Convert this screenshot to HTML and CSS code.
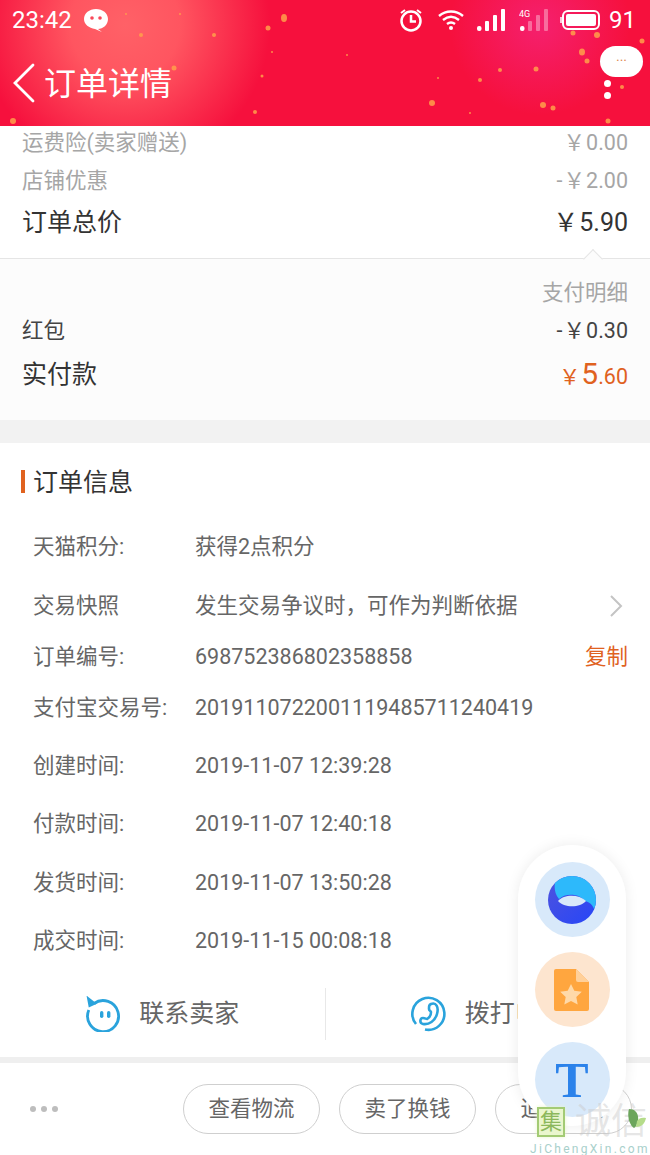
FILE: index.html
```html
<!DOCTYPE html>
<html>
<head>
  <meta charset="utf-8">
  <link rel="stylesheet" href="styles.css">
</head>
<body>
  <div class="screen">
    <div class="header">
      <svg class="sparkles" width="650" height="126" viewBox="0 0 650 126">
        <g fill="#ffa04a" fill-opacity=".85">
          <ellipse cx="284" cy="18" rx="3" ry="4"/><circle cx="268" cy="28" r="2.5"/><circle cx="214" cy="35" r="2"/>
          <circle cx="141" cy="35" r="2"/><ellipse cx="582" cy="52" rx="3" ry="3.5"/><circle cx="587" cy="61" r="2.5"/>
          <circle cx="500" cy="70" r="2"/><circle cx="536" cy="69" r="2.5"/><circle cx="480" cy="80" r="2"/>
          <circle cx="432" cy="103" r="3"/><circle cx="543" cy="105" r="3"/><circle cx="553" cy="108" r="2.5"/>
          <circle cx="255" cy="112" r="2"/><circle cx="13" cy="121" r="3"/><circle cx="608" cy="121" r="2.5"/>
          <circle cx="174" cy="68" r="2.5"/><circle cx="642" cy="41" r="2.5"/><circle cx="622" cy="87" r="2"/>
          <circle cx="573" cy="33" r="2.5"/><circle cx="597" cy="35" r="3"/><circle cx="262" cy="76" r="1.5"/>
          <circle cx="347" cy="55" r="1"/><circle cx="272" cy="52" r="1"/><circle cx="180" cy="14" r="1"/>
          <circle cx="126" cy="14" r="1"/><circle cx="438" cy="78" r="1"/><circle cx="470" cy="113" r="1"/>
        </g>
      </svg>
      <div class="status-bar">
        <div class="status-left">
          <span class="clock">23:42</span>
          <svg width="26" height="26" viewBox="0 0 26 26">
            <path d="M13 2c6.600 0 12 4.300 12 10s-5 10-10 10l4 3-7-3C6 21 1 17.500 1 12 1 6.300 6.400 2 13 2z" fill="#fff"/>
            <circle cx="9" cy="11" r="1.800" fill="#f9485a"/><circle cx="17" cy="11" r="1.800" fill="#f9485a"/>
          </svg>
        </div>
        <div class="status-right">
          <svg width="26" height="26" viewBox="0 0 26 26" fill="none" stroke="#fff" stroke-width="2.500">
            <circle cx="13" cy="14" r="9.500"/><path d="M13 8v6.500h5"/><path d="M3 6l4-3M23 6l-4-3" stroke-width="2"/>
          </svg>
          <svg class="wifi" width="28" height="26" viewBox="0 0 28 26" fill="none" stroke="#fff" stroke-width="2.400">
            <path d="M2 9c7-6 17-6 24 0M6 13c5-4 11-4 16 0M10 17c2.500-2 5.500-2 8 0"/><circle cx="14" cy="21" r="2" fill="#fff" stroke="none"/>
          </svg>
          <svg class="signal" width="30" height="24" viewBox="0 0 30 24" fill="#fff">
            <rect x="1" y="18" width="4.500" height="5" rx="2"/><rect x="9" y="13" width="4" height="10" rx="1"/>
            <rect x="17" y="7" width="4" height="16" rx="1"/><rect x="25" y="1" width="4" height="22" rx="1"/>
          </svg>
          <svg class="signal-4g" width="30" height="26" viewBox="0 0 30 26">
            <g fill="#fff" fill-opacity=".35"><rect x="9" y="14" width="4" height="10" rx="1"/><rect x="17" y="8" width="4" height="16" rx="1"/><rect x="25" y="2" width="4" height="22" rx="1"/></g>
            <rect x="1" y="19" width="4.500" height="5" rx="2" fill="#fff"/>
            <text x="0" y="10" class="net-label">4G</text>
          </svg>
          <svg class="battery" width="41" height="24" viewBox="0 0 41 24" fill="none">
            <rect x="3" y="3" width="36" height="18" rx="5" stroke="#fff" stroke-width="2"/>
            <rect x="6" y="6" width="30" height="12" rx="2" fill="#fff"/>
            <path d="M1 9v6" stroke="#fff" stroke-width="1.500"/>
          </svg>
          <span class="battery-level">91</span>
        </div>
      </div>
      <div class="nav-bar">
        <svg class="back" width="24" height="40" viewBox="0 0 24 40" fill="none" stroke="#fff" stroke-width="2.800" stroke-linecap="round">
          <path d="M21 2L3 20l18 18"/>
        </svg>
        <span class="nav-title">订单详情</span>
      </div>
      <div class="menu-bubble">···</div>
      <div class="menu-dot menu-dot-a"></div>
      <div class="menu-dot menu-dot-b"></div>
    </div>

    <div class="summary">
      <div class="row row-muted"><span>运费险(卖家赠送)</span><span class="price"><i>￥</i>0.00</span></div>
      <div class="row row-muted"><span>店铺优惠</span><span class="price">-<i>￥</i>2.00</span></div>
      <div class="row row-total"><span>订单总价</span><span class="price"><i>￥</i>5.90</span></div>
    </div>

    <div class="payment">
      <div class="caret"></div>
      <div class="row row-muted row-end"><span>支付明细</span></div>
      <div class="row row-plain"><span>红包</span><span class="price">-<i>￥</i>0.30</span></div>
      <div class="row row-paid">
        <span>实付款</span>
        <span class="paid"><i>￥</i><b>5</b>.60</span>
      </div>
    </div>

    <div class="gap"></div>

    <div class="info">
      <div class="info-title">订单信息</div>
      <div class="info-row"><span class="info-key">天猫积分:</span><span class="info-val">获得2点积分</span></div>
      <div class="info-row info-row-b">
        <span class="info-key">交易快照</span><span class="info-val">发生交易争议时，可作为判断依据</span>
        <svg class="chevron" width="14" height="24" viewBox="0 0 14 24" fill="none" stroke="#c4c4c4" stroke-width="2"><path d="M2 2l10 10L2 22"/></svg>
      </div>
      <div class="info-row info-row-c">
        <span class="info-key">订单编号:</span><span class="info-val">698752386802358858</span>
        <span class="copy">复制</span>
      </div>
      <div class="info-row"><span class="info-key">支付宝交易号:</span><span class="info-val">2019110722001119485711240419</span></div>
      <div class="info-row"><span class="info-key">创建时间:</span><span class="info-val">2019-11-07 12:39:28</span></div>
      <div class="info-row"><span class="info-key">付款时间:</span><span class="info-val">2019-11-07 12:40:18</span></div>
      <div class="info-row"><span class="info-key">发货时间:</span><span class="info-val">2019-11-07 13:50:28</span></div>
      <div class="info-row"><span class="info-key">成交时间:</span><span class="info-val">2019-11-15 00:08:18</span></div>
    </div>

    <div class="contact">
      <div class="contact-item">
        <svg width="36" height="36" viewBox="0 0 36 36" fill="none" stroke="#2aa3dc" stroke-width="2.800">
          <path d="M9 7.500A15.500 15.500 0 1 1 3.800 14"/><path d="M3 2l7 5.500-5.500 2.500z" stroke-width="2" fill="#2aa3dc"/>
          <rect x="15" y="15" width="3.400" height="7" rx="1.700" fill="#2aa3dc" stroke="none"/><rect x="22" y="15" width="3.400" height="7" rx="1.700" fill="#2aa3dc" stroke="none"/>
        </svg>
        <span>联系卖家</span>
      </div>
      <div class="contact-item contact-phone">
        <svg width="36" height="36" viewBox="0 0 36 36" fill="none" stroke="#2aa3dc" stroke-width="2.600">
          <path d="M5 28A16 16 0 1 1 14 33.500"/>
          <path d="M20 8c5-2 8 3 6 10s-8 11-14 10c-4-1-3-6 0-6 2 0 3 1 4 1 2-1 4-4 4-7 0-1-2-1-2-3 0-3 0-4 2-5z"/>
        </svg>
        <span>拨打电话</span>
      </div>
    </div>

    <div class="gap-thin"></div>

    <div class="actions">
      <div class="more"><span></span><span></span><span></span></div>
      <div class="btn">查看物流</div>
      <div class="btn">卖了换钱</div>
      <div class="btn">追加评价</div>
    </div>

    <div class="float-panel">
      <div class="float-circle float-blue">
        <svg width="50" height="50" viewBox="0 0 50 50">
          <defs>
            <linearGradient id="orb" x1="0" y1="0" x2="1" y2="1"><stop offset="0" stop-color="#4f52dd"/><stop offset="1" stop-color="#2646f8"/></linearGradient>
          </defs>
          <circle cx="25" cy="25" r="24" fill="url(#orb)"/>
          <path d="M8 8A24 24 0 0 1 49 25 24 24 0 0 1 47 34C45 29 42 27 38 26 32 18 18 18 12 24 8 20 7 13 8 8z" fill="#2db9fb"/>
          <path d="M11 26C17 19 32 19 39 26 33 33 17 33 11 26z" fill="#d8e9fa"/>
        </svg>
      </div>
      <div class="float-circle float-orange">
        <svg width="36" height="42" viewBox="0 0 36 42">
          <path d="M2 0h20l13 13v27a2 2 0 0 1-2 2H2a2 2 0 0 1-2-2V2a2 2 0 0 1 2-2z" fill="#ffa63f"/>
          <path d="M22 0l13 13H24a2 2 0 0 1-2-2z" fill="#ffd09a"/>
          <path d="M17 15l3.300 6.800 7.500 1-5.500 5.200 1.400 7.500-6.700-3.600-6.700 3.600 1.400-7.500-5.500-5.200 7.500-1z" fill="#ffd9a8"/>
        </svg>
      </div>
      <div class="float-circle float-sky"><span class="t-icon">T</span></div>
    </div>

    <div class="watermark">
      <div class="wm-top">
        <span class="wm-box">集</span>
        <span class="wm-text">诚信</span>
      </div>
      <div class="wm-url">JiChengXin.com</div>
      <svg class="wm-leaf" width="18" height="22" viewBox="0 0 18 22"><path d="M1 1c6 0 10 4 9 12-1 3-2 6-4 7C1 17-1 7 1 1z" fill="#6ca55c"/><path d="M9 13c2-3 5-4 9-3-1 5-4 9-10 9z" fill="#b5dc8a"/></svg>
    </div>
  </div>
</body>
</html>
```

FILE: styles.css
```css
/* Order detail screen */
:root {
  --cjk: "Roboto", "Noto Sans CJK SC", sans-serif;
  --text-dark: #333;
  --text-mid: #666;
  --text-muted: #a6a6a6;
  --orange: #e0621f;
  --line: #e5e5e5;
  --gap: #f2f2f2;
}

* {
  box-sizing: border-box;
}

html, body {
  margin: 0;
  padding: 0;
}

body {
  width: 650px;
  height: 1155px;
  overflow: hidden;
  background: #fff;
  font-family: var(--cjk);
  color: var(--text-dark);
}

.screen {
  position: relative;
  width: 650px;
  height: 1155px;
  overflow: hidden;
}

i, b {
  font-style: normal;
  font-weight: 400;
}

/* Header */
.header {
  position: relative;
  z-index: 1;
  height: 126px;
  padding: 0 14px 0 12px;
  color: #fff;
  background:
    radial-gradient(circle at 125px 25px, #ff6167 0, #ff5560 55px, rgba(255, 60, 80, 0) 145px),
    radial-gradient(circle at 540px 25px, #f5206e 0, rgba(245, 32, 110, 0) 90px),
    #f6103d;
}

.sparkles {
  position: absolute;
  left: 0;
  top: 0;
}

.status-bar {
  position: relative;
  display: flex;
  align-items: center;
  justify-content: space-between;
  height: 40px;
}

.status-left, .status-right {
  display: flex;
  align-items: center;
}

.clock {
  font-size: 24px;
  margin-right: 11px;
}

.status-right {
  margin-top: -1px;
}

.wifi {
  margin-left: 13px;
}

.signal {
  margin-left: 11px;
}

.signal-4g {
  margin-left: 13px;
}

.net-label {
  font-size: 9px;
  font-family: "Roboto", sans-serif;
  fill: #fff;
}

.battery {
  margin-left: 11px;
}

.battery-level {
  font-size: 24px;
  margin-left: 8px;
}

.nav-bar {
  position: relative;
  display: flex;
  align-items: center;
  gap: 8px;
  height: 86px;
}

.nav-title {
  font-size: 32px;
  line-height: 40px;
  margin-top: 2px;
}

.menu-bubble {
  position: absolute;
  left: 600px;
  top: 46px;
  width: 43px;
  height: 31px;
  border-radius: 16px;
  background: #fff;
  color: #e08a50;
  font-size: 14px;
  line-height: 31px;
  text-align: center;
}

.menu-dot {
  position: absolute;
  left: 604px;
  width: 7px;
  height: 7px;
  border-radius: 50%;
  background: #fff;
}

.menu-dot-a {
  top: 80px;
}

.menu-dot-b {
  top: 92px;
}

/* Price rows */
.row {
  display: flex;
  align-items: center;
  justify-content: space-between;
  height: 38px;
  padding: 0 22px;
  font-size: 21.500px;
  line-height: 26px;
}

.row-muted {
  color: var(--text-muted);
}

.row-plain {
  color: #444;
}

.row-total {
  height: 46px;
  font-size: 25px;
  color: var(--text-dark);
}

.row-end {
  justify-content: flex-end;
}

.price i {
  margin: 0 1px;
}

.summary {
  margin-top: -2px;
  height: 134px;
}

.payment {
  position: relative;
  height: 162px;
  padding-top: 15px;
  background: #fcfcfc;
  border-top: 1px solid var(--line);
}

.caret {
  position: absolute;
  left: 586px;
  top: -7px;
  width: 14px;
  height: 14px;
  transform: rotate(45deg);
  background: #fcfcfc;
  border-top: 1px solid var(--line);
  border-left: 1px solid var(--line);
}

.row-paid {
  height: 50px;
  font-size: 25px;
}

.paid {
  color: var(--orange);
  font-size: 21.500px;
}

.paid i {
  font-size: 21px;
  margin-right: 1px;
}

.paid b {
  font-size: 30px;
}

.gap {
  height: 23px;
  background: var(--gap);
}

/* Order info */
.info {
  height: 526px;
  padding-top: 27px;
}

.info-title {
  height: 23px;
  margin: 0 0 25px 21px;
  padding-left: 8px;
  border-left: 4px solid var(--orange);
  font-size: 25px;
  line-height: 25px;
}

.info-row {
  display: flex;
  align-items: center;
  height: 58.400px;
  padding: 0 22px 0 33px;
  font-size: 21.500px;
  line-height: 26px;
  color: var(--text-mid);
}

.info-row-b {
  height: 60px;
}

.info-row-c {
  height: 42px;
}

.info-key {
  width: 162px;
  flex: none;
}

.info-val {
  flex: 1;
}

.chevron {
  margin-right: 5px;
}

.copy {
  color: var(--orange);
}

/* Contact */
.contact {
  display: flex;
  align-items: center;
  height: 88px;
  padding-top: 2px;
  font-size: 25px;
  line-height: 30px;
  color: var(--text-mid);
}

.contact-item {
  flex: 1;
  display: flex;
  align-items: center;
  justify-content: center;
  gap: 18px;
  height: 52px;
}

.contact-phone {
  border-left: 1px solid #e8e8e8;
}

.gap-thin {
  height: 6px;
  background: #efefef;
}

/* Bottom actions */
.actions {
  display: flex;
  align-items: center;
  gap: 19px;
  height: 92px;
  padding: 0 18px 0 30px;
}

.more {
  display: flex;
  gap: 5px;
  margin-right: auto;
}

.more span {
  width: 6px;
  height: 6px;
  border-radius: 50%;
  background: #bdbdbd;
}

.btn {
  width: 137px;
  height: 50px;
  border: 1px solid #cfcfcf;
  border-radius: 25px;
  font-size: 21.500px;
  line-height: 48px;
  text-align: center;
  color: var(--text-mid);
}

/* Floating tools panel */
.float-panel {
  position: absolute;
  left: 518px;
  top: 845px;
  display: flex;
  flex-direction: column;
  align-items: center;
  gap: 15px;
  width: 108px;
  height: 281px;
  padding-top: 17px;
  border-radius: 54px;
  background: #fff;
  box-shadow: 0 0 14px rgba(0, 0, 0, 0.08);
}

.float-circle {
  display: flex;
  align-items: center;
  justify-content: center;
  flex: none;
  width: 75px;
  height: 75px;
  border-radius: 50%;
}

.float-blue, .float-sky {
  background: #d8e9fa;
}

.float-orange {
  background: #fde5cf;
}

.t-icon {
  font-family: "Liberation Serif", serif;
  font-size: 50px;
  font-weight: 700;
  line-height: 1;
  color: #2b82ea;
}

/* Watermark */
.watermark {
  position: absolute;
  left: 530px;
  top: 1106px;
  width: 120px;
  height: 49px;
}

.wm-top {
  display: flex;
  align-items: center;
  gap: 10px;
  padding-left: 7px;
}

.wm-box {
  width: 28px;
  height: 30px;
  border: 2px solid #a3cb74;
  background: #eaf6cd;
  color: #8cb85c;
  font-size: 22px;
  line-height: 26px;
  text-align: center;
  box-shadow: 0 0 4px #eaf6cd;
}

.wm-text {
  font-size: 36px;
  line-height: 32px;
  color: rgba(200, 200, 200, 0.45);
  white-space: nowrap;
}

.wm-url {
  margin-top: 5px;
  font-size: 12px;
  line-height: 12px;
  letter-spacing: 2.300px;
  color: #a8d0cb;
  white-space: nowrap;
}

.wm-leaf {
  position: absolute;
  left: 98px;
  top: 2px;
}
```
